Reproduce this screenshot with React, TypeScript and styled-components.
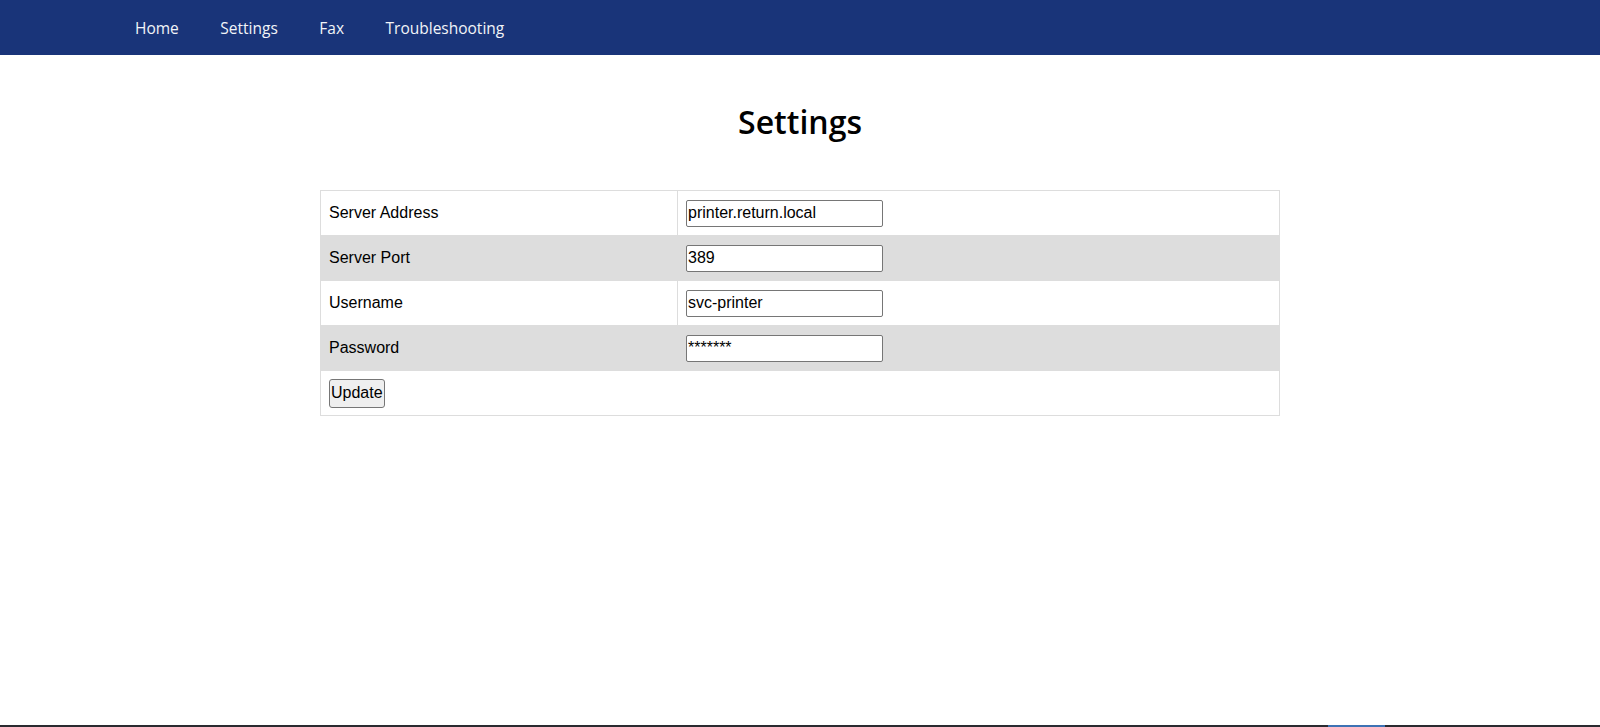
import React, { useState } from 'react'
import styled, { createGlobalStyle } from 'styled-components'

const GlobalStyle = createGlobalStyle`
  html, body {
    margin: 0;
    padding: 0;
    background: #ffffff;
  }
  body {
    font-family: 'Liberation Sans', Arial, sans-serif;
    font-size: 16px;
    color: #000000;
  }
`

interface Field {
  key: string
  label: string
  type: string
  value: string
}

const initialFields: Field[] = [
  { key: 'address', label: 'Server Address', type: 'text', value: 'printer.return.local' },
  { key: 'port', label: 'Server Port', type: 'text', value: '389' },
  { key: 'username', label: 'Username', type: 'text', value: 'svc-printer' },
  { key: 'password', label: 'Password', type: 'text', value: '*******' },
]

const navLinks = ['Home', 'Settings', 'Fax', 'Troubleshooting']

export default function App() {
  const [fields, setFields] = useState(initialFields)

  const updateField = (key: string, value: string) => {
    setFields((prev) => prev.map((f) => (f.key === key ? { ...f, value } : f)))
  }

  return (
    <Page>
      <GlobalStyle />
      <NavBar>
        {navLinks.map((link) => (
          <NavLink key={link} href='#'>
            {link}
          </NavLink>
        ))}
      </NavBar>
      <Main>
        <Title>Settings</Title>
        <form onSubmit={(e) => e.preventDefault()}>
          <SettingsTable>
            <tbody>
              {fields.map((field, i) => (
                <Row key={field.key} $striped={i % 2 === 1}>
                  <LabelCell>{field.label}</LabelCell>
                  <Cell>
                    <TextInput
                      type={field.type}
                      value={field.value}
                      onChange={(e) => updateField(field.key, e.target.value)}
                    />
                  </Cell>
                </Row>
              ))}
              <Row $striped={false}>
                <Cell colSpan={2}>
                  <UpdateButton type='submit'>Update</UpdateButton>
                </Cell>
              </Row>
            </tbody>
          </SettingsTable>
        </form>
      </Main>
      <BottomBar>
        <BottomMark />
      </BottomBar>
    </Page>
  )
}

const Page = styled.div`
  display: flex;
  flex-direction: column;
  min-height: 100vh;
`

const NavBar = styled.nav`
  display: flex;
  align-items: center;
  gap: 41.5px;
  height: 55px;
  padding-left: 135px;
  background-color: #193479;
`

const NavLink = styled.a`
  font-family: 'Open Sans', sans-serif;
  font-size: 15.5px;
  font-weight: 500;
  color: #f2f4f8;
  text-decoration: none;
`

const Main = styled.main`
  flex: 1;
`

const Title = styled.h1`
  margin: 45px 0 47px;
  font-family: 'Open Sans', sans-serif;
  font-size: 32px;
  font-weight: 600;
  text-align: center;
  color: #000000;
`

const SettingsTable = styled.table`
  width: 960px;
  margin: 0 auto;
  border-collapse: collapse;
  table-layout: fixed;
`

const Row = styled.tr<{ $striped: boolean }>`
  height: 45px;
  background-color: ${(p) => (p.$striped ? '#dddddd' : '#ffffff')};
`

const Cell = styled.td`
  padding: 0 8px;
  border: 1px solid #dddddd;
  vertical-align: middle;
`

const LabelCell = styled(Cell)`
  width: 340px;
`

const TextInput = styled.input`
  box-sizing: border-box;
  width: 197px;
  height: 27px;
  padding: 1px 1px;
  font-family: 'Liberation Sans', Arial, sans-serif;
  font-size: 16px;
  color: #000000;
  background: #ffffff;
  border: 1px solid #767676;
  border-radius: 2px;
  outline: 0;
`

const UpdateButton = styled.button`
  box-sizing: border-box;
  height: 29px;
  padding: 0 1px;
  font-family: 'Liberation Sans', Arial, sans-serif;
  font-size: 16px;
  color: #000000;
  background-color: #efefef;
  border: 1px solid #767676;
  border-radius: 3px;
`

const BottomBar = styled.div`
  display: flex;
  justify-content: flex-end;
  height: 2px;
  padding-right: 215px;
  background-color: #2a2b30;
`

const BottomMark = styled.span`
  width: 57px;
  background-color: #3d72b4;
`
